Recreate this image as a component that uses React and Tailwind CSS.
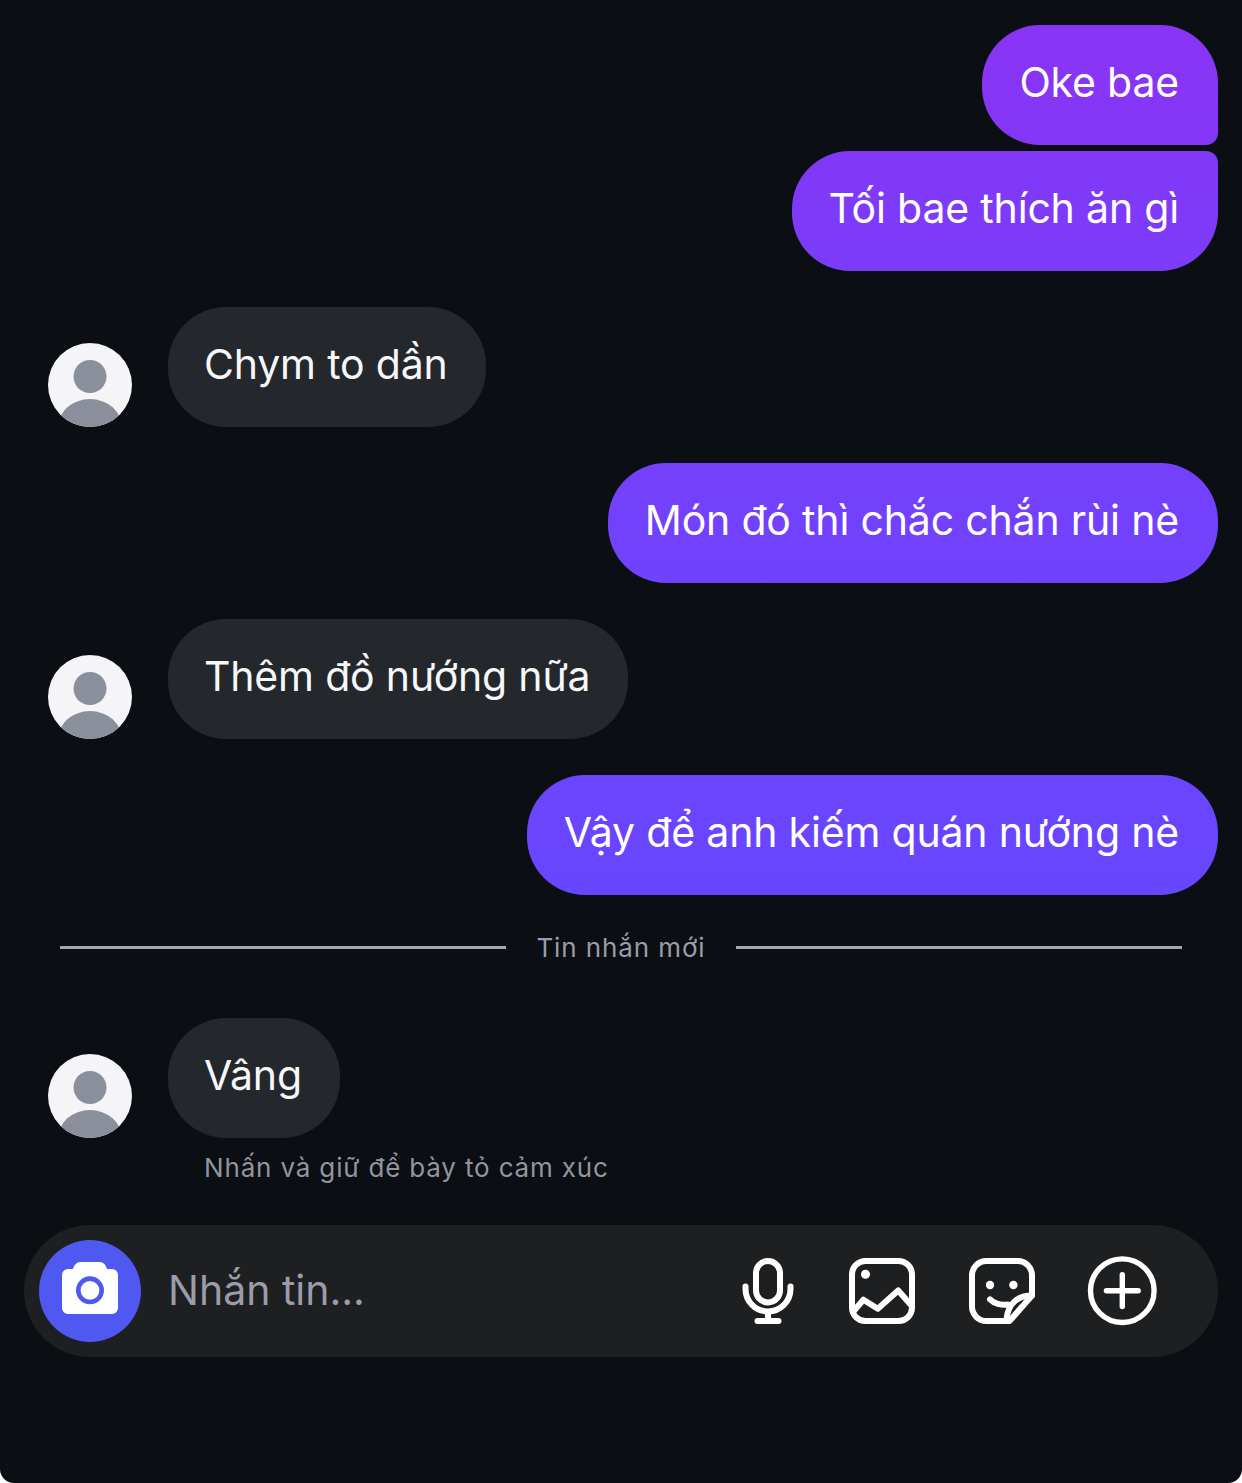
import React from 'react'

const font = { fontFamily: 'Inter, "Noto Sans", sans-serif' }

const Avatar = () => (
    <svg width="84" height="84" viewBox="0 0 84 84" className="shrink-0">
        <defs>
            <clipPath id="avatar-clip">
                <circle cx="42" cy="42" r="42" />
            </clipPath>
        </defs>
        <circle cx="42" cy="42" r="42" fill="#f5f5f8" />
        <g clipPath="url(#avatar-clip)" fill="#8b8e9b">
            <circle cx="42" cy="33.5" r="16.5" />
            <ellipse cx="42" cy="84" rx="32" ry="28" />
        </g>
    </svg>
)

const Outgoing = ({ text, className }) => (
    <div className="flex justify-end pr-6">
        <div className={`h-[120px] flex items-center pl-[37px] pr-[39px] pb-1 text-[41px] tracking-[-0.18px] text-white whitespace-nowrap ${className}`}>
            {text}
        </div>
    </div>
)

const Incoming = ({ text }) => (
    <div className="flex items-end gap-9 pl-12">
        <Avatar />
        <div className="h-[120px] flex items-center pl-9 pr-[38px] pb-1 rounded-[58px] bg-[#24272c] text-[41px] tracking-[-0.18px] text-[#f6f7f8] whitespace-nowrap">
            {text}
        </div>
    </div>
)

const CameraIcon = () => (
    <svg width="56" height="52" viewBox="0 0 56 52">
        <path
            d="M6 7h5c1.200-4 3.500-7 7.500-7h19c4 0 6.300 3 7.500 7h5a6 6 0 0 1 6 6v33a6 6 0 0 1-6 6H6a6 6 0 0 1-6-6V13a6 6 0 0 1 6-6z"
            fill="#fff"
        />
        <circle cx="28" cy="28.300" r="11.700" fill="#fff" stroke="#5058f2" strokeWidth="4.600" />
    </svg>
)

const MicIcon = () => (
    <svg width="72" height="72" viewBox="0 0 24 24" fill="none" stroke="#fff" strokeWidth="2" strokeLinecap="round">
        <rect x="8" y="2" width="8" height="13.800" rx="4" />
        <path d="M4.500 10.500v.8a7.500 7.500 0 0 0 15 0v-.8" />
        <path d="M12 19v3M8.500 22h7" />
    </svg>
)

const ImageIcon = () => (
    <svg width="72" height="72" viewBox="0 0 24 24" fill="none" stroke="#fff" strokeWidth="2" strokeLinecap="round" strokeLinejoin="round">
        <rect x="2" y="2" width="20" height="20" rx="4.500" />
        <circle cx="6.500" cy="6.400" r="1.500" fill="#fff" stroke="none" />
        <path d="M2.800 18.400l3-3.500 4.800 3 6.800-6.100 4.200 4.800" />
    </svg>
)

const StickerIcon = () => (
    <svg width="72" height="72" viewBox="0 0 24 24" fill="none" stroke="#fff" strokeWidth="2" strokeLinecap="round" strokeLinejoin="round">
        <path d="M6.800 2h10.400A4.800 4.800 0 0 1 22 6.800v6.700L14.500 22H6.800A4.800 4.800 0 0 1 2 17.200V6.800A4.800 4.800 0 0 1 6.800 2z" />
        <path d="M22 13.500c-4.800 0-8.100 2.800-8.500 8" />
        <path d="M8 14.800c1.300 1.300 3.700 2 6 1.700" />
        <circle cx="8" cy="10" r="1.400" fill="#fff" stroke="none" />
        <circle cx="15.800" cy="10" r="1.400" fill="#fff" stroke="none" />
    </svg>
)

const PlusIcon = () => (
    <svg width="72" height="72" viewBox="0 0 24 24" fill="none" stroke="#fff" strokeWidth="1.800" strokeLinecap="round">
        <circle cx="12.100" cy="11.900" r="10.600" />
        <path d="M6.800 11.900h10.600M12.100 6.600v10.600" />
    </svg>
)

export default function App() {
    return (
        <div className="bg-white">
            <div className="h-[1483px] w-[1242px] pt-[25px] bg-[#0b0e13] rounded-b-[14px] overflow-hidden" style={font}>
                {/* Messages */}
                <div className="flex flex-col gap-1.5">
                    <Outgoing text="Oke bae" className="bg-linear-to-b from-[#8a34f4] to-[#8337f6] rounded-tl-[58px] rounded-tr-[58px] rounded-bl-[58px] rounded-br-[12px]" />
                    <Outgoing text="Tối bae thích ăn gì" className="bg-linear-to-b from-[#8138f7] to-[#7b3cf9] rounded-tl-[58px] rounded-tr-[12px] rounded-bl-[58px] rounded-br-[58px]" />
                </div>
                <div className="flex flex-col gap-9 mt-9">
                    <Incoming text="Chym to dần" />
                    <Outgoing text="Món đó thì chắc chắn rùi nè" className="bg-linear-to-b from-[#7540fc] to-[#7042fd] rounded-[58px]" />
                    <Incoming text="Thêm đồ nướng nữa" />
                    <Outgoing text="Vậy để anh kiếm quán nướng nè" className="bg-linear-to-b from-[#6c44fe] to-[#6746ff] rounded-[58px]" />
                </div>

                {/* New messages divider */}
                <div className="flex items-center mt-[36px] px-[60px] h-[33px]">
                    <div className="h-[3px] flex-1 bg-[#a3a6b4]" />
                    <span className="px-[30px] text-[26px] leading-none tracking-[0.9px] text-[#9a9da9] whitespace-nowrap">Tin nhắn mới</span>
                    <div className="h-[3px] flex-1 bg-[#a3a6b4]" />
                </div>

                <div className="mt-[54px]">
                    <Incoming text="Vâng" />
                </div>
                <div className="pl-[204px] mt-3.5 text-[26px] leading-[32px] tracking-[0.84px] text-[#92959f]">
                    Nhấn và giữ để bày tỏ cảm xúc
                </div>

                {/* Composer */}
                <div className="flex items-center h-[132px] mt-[41px] mx-6 pl-[15px] pr-[60px] rounded-[66px] bg-[#1e1f21]">
                    <div className="w-[102px] h-[102px] shrink-0 flex items-center justify-center rounded-full bg-[#5058f2]">
                        <div className="mb-1.5"><CameraIcon /></div>
                    </div>
                    <div className="flex-1 pl-[27px] text-[41px] text-[#9a9da9]">Nhắn tin...</div>
                    <div className="flex items-center">
                        <MicIcon />
                        <div className="ml-[42px]"><ImageIcon /></div>
                        <div className="ml-12"><StickerIcon /></div>
                        <div className="ml-12"><PlusIcon /></div>
                    </div>
                </div>
            </div>
        </div>
    )
}
